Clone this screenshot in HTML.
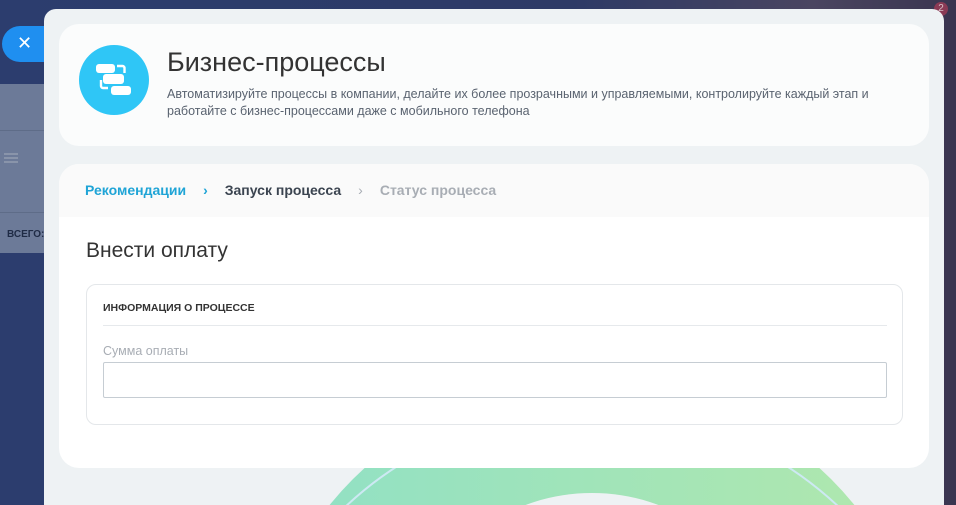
<!DOCTYPE html>
<html><head><meta charset="utf-8"><style>
*{margin:0;padding:0;box-sizing:border-box}
body{width:956px;height:505px;overflow:hidden;position:relative;font-family:"Liberation Sans",sans-serif;background:linear-gradient(90deg,#2c3d6e,#2d3a66 60%,#4a4560 85%,#3a3550);}
.lp{position:absolute;left:0;top:84px;width:60px;height:169px;background:#6c7a98}
.lp .l1{position:absolute;left:0;top:46px;width:60px;height:1px;background:#5e6c88}
.lp .l2{position:absolute;left:0;top:128px;width:60px;height:1px;background:#5e6c88}
.ham{position:absolute;left:4px;top:153px;width:14px}
.ham i{display:block;height:2px;background:#8994aa;margin-bottom:2px}
.vs{position:absolute;left:7px;top:229px;font-size:10px;font-weight:bold;color:#1f2b45}
.close{position:absolute;left:2px;top:26px;width:60px;height:36px;border-radius:18px;background:#1f8ff0;color:#fff;font-size:18px;padding-left:15px;line-height:34px}
.badge{position:absolute;left:934px;top:2px;width:14px;height:14px;border-radius:7px;background:#8a3a55;color:#d9c0c8;font-size:10px;text-align:center;line-height:14px}
.panel{position:absolute;left:44px;top:9px;width:900px;height:496px;background:#eef2f4;border-radius:12px 12px 0 0;overflow:hidden}
.card1{position:absolute;left:15px;top:15px;width:870px;height:122px;background:#fbfcfc;border-radius:20px}
.ic{position:absolute;left:20px;top:21px;width:70px;height:70px;border-radius:35px;background:#2fc6f6}
.t{position:absolute;left:108px;top:23px;font-size:27px;font-weight:300;color:#333}
.d{position:absolute;left:108px;top:62px;width:740px;font-size:12.5px;line-height:17px;color:#5a6370}
.card2{position:absolute;left:15px;top:155px;width:870px;height:304px;background:#fff;border-radius:20px;overflow:hidden}
.bc{height:53px;background:#fafafa;padding-left:26px;font-size:14px;font-weight:bold;line-height:53px;white-space:nowrap}
.bc span{margin-right:17px}
.h{position:absolute;left:27px;top:75px;font-size:21px;font-weight:300;color:#333}
.box{position:absolute;left:27px;top:120px;width:817px;height:141px;border:1px solid #e4e7ea;border-radius:10px}
.bh{position:absolute;left:16px;top:17px;font-size:10.5px;font-weight:bold;color:#333}
.bl{position:absolute;left:16px;top:40px;width:784px;height:1px;background:#e6e9ec}
.lb{position:absolute;left:16px;top:59px;font-size:12.5px;color:#a8adb4}
.in{position:absolute;left:16px;top:77px;width:784px;height:36px;border:1px solid #c6cdd3;border-radius:2px}
</style></head><body>
<div class="lp"><div class="l1"></div><div class="l2"></div></div>
<div class="ham"><i></i><i></i><i></i></div>
<div class="vs">ВСЕГО:</div>
<div class="close">✕</div>
<div class="badge">2</div>
<div class="panel">
<svg style="position:absolute;left:0;top:0" width="900" height="496"><defs><linearGradient id="g" x1="0" x2="1"><stop offset="0" stop-color="#8fe0c6"/><stop offset="1" stop-color="#b2e8ac"/></linearGradient></defs>
<circle cx="548" cy="709" r="338" fill="url(#g)"/>
<ellipse cx="548" cy="600" rx="150" ry="116" fill="#eef2f4"/>
<circle cx="548" cy="760" r="360" fill="none" stroke="#cde9f3" stroke-width="2"/>
</svg>
<div class="card1">
<div class="ic"><svg width="70" height="70" viewBox="0 0 70 70" fill="#fff">
<rect x="17" y="19" width="19" height="9" rx="3"/><rect x="24" y="29" width="21" height="10" rx="3"/><rect x="32" y="41" width="20" height="9" rx="3"/>
<path d="M38 21h5.5a2 2 0 0 1 2 2v5" stroke="#fff" stroke-width="2.4" fill="none"/>
<path d="M22 35v6a2 2 0 0 0 2 2h5" stroke="#fff" stroke-width="2.4" fill="none"/></svg></div>
<div class="t">Бизнес-процессы</div>
<div class="d">Автоматизируйте процессы в компании, делайте их более прозрачными и управляемыми, контролируйте каждый этап и работайте с бизнес-процессами даже с мобильного телефона</div>
</div>
<div class="card2">
<div class="bc"><span style="color:#1fa4d6">Рекомендации</span><span style="color:#1fa4d6">›</span><span style="color:#3b4450">Запуск процесса</span><span style="color:#a8adb4;font-weight:normal">›</span><span style="color:#a8adb4">Статус процесса</span></div>
<div class="h">Внести оплату</div>
<div class="box"><div class="bh">ИНФОРМАЦИЯ О ПРОЦЕССЕ</div><div class="bl"></div><div class="lb">Сумма оплаты</div><div class="in"></div></div>
</div>
</div>
</body></html>
